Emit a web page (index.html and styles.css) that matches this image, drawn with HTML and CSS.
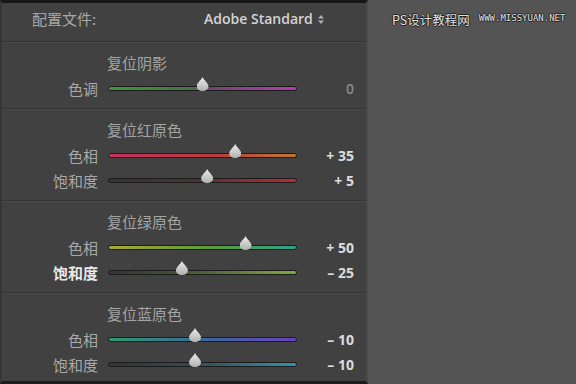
FILE: index.html
```html
<!DOCTYPE html>
<html>
<head>
  <title>HSL</title>
  <link rel="stylesheet" href="styles.css">
</head>
<body>
  <div class="panel">
    <div class="profile">
      <span class="profile-label">配置文件:</span>
      <span class="profile-value">Adobe Standard
        <svg class="arrows" width="6" height="9" viewBox="0 0 6 9"><path d="M0 3.5 L3 0 L6 3.5 Z M0 5.5 L3 9 L6 5.5 Z" fill="#b0b0b0"/></svg>
      </span>
    </div>

    <div class="section">
      <div class="title">复位阴影</div>
      <div class="row">
        <span class="label">色调</span>
        <div class="track shadow-tone"><span class="thumb" style="left: 50%"></span></div>
        <span class="value zero">0</span>
      </div>
    </div>

    <div class="section">
      <div class="title">复位红原色</div>
      <div class="row">
        <span class="label">色相</span>
        <div class="track red-hue"><span class="thumb" style="left: 67.5%"></span></div>
        <span class="value">+ 35</span>
      </div>
      <div class="row">
        <span class="label">饱和度</span>
        <div class="track red-sat"><span class="thumb" style="left: 52.5%"></span></div>
        <span class="value">+ 5</span>
      </div>
    </div>

    <div class="section">
      <div class="title">复位绿原色</div>
      <div class="row">
        <span class="label">色相</span>
        <div class="track green-hue"><span class="thumb" style="left: 73%"></span></div>
        <span class="value">+ 50</span>
      </div>
      <div class="row active">
        <span class="label">饱和度</span>
        <div class="track green-sat"><span class="thumb" style="left: 39%"></span></div>
        <span class="value">&ndash; 25</span>
      </div>
    </div>

    <div class="section last">
      <div class="title">复位蓝原色</div>
      <div class="row">
        <span class="label">色相</span>
        <div class="track blue-hue"><span class="thumb" style="left: 46%"></span></div>
        <span class="value">&ndash; 10</span>
      </div>
      <div class="row">
        <span class="label">饱和度</span>
        <div class="track blue-sat"><span class="thumb" style="left: 46%"></span></div>
        <span class="value">&ndash; 10</span>
      </div>
    </div>
  </div>

  <div class="side">
    <span class="mark-cn">PS设计教程网</span>
    <span class="mark-url">WWW.MISSYUAN.NET</span>
  </div>
</body>
</html>
```

FILE: styles.css
```css
body {
  margin: 0;
  width: 576px;
  height: 384px;
  overflow: hidden;
  display: flex;
  background-color: #545454;
  font-family: "Noto Sans CJK SC", "Open Sans", sans-serif;
}

.panel {
  width: 364px;
  height: 378px;
  background-color: #414141;
  border-top: 3px solid #161616;
  border-bottom: 3px solid #1c1c1c;
  border-left: 2px solid #363636;
  border-right: 2px solid #4b4b4b;
  display: flex;
  flex-direction: column;
}

.profile {
  height: 30px;
  padding-bottom: 8px;
  flex-shrink: 0;
  display: flex;
  align-items: center;
  border-bottom: 1px solid #343434;
  box-shadow: 0 1px 0 #4a4a4a;
}

.profile-label {
  width: 202px;
  padding-left: 30px;
  box-sizing: border-box;
  font-size: 15px;
  color: #a8a8a8;
}

.profile-value {
  font-family: "Open Sans", sans-serif;
  font-weight: 600;
  font-size: 14px;
  color: #d4d4d4;
}

.arrows {
  margin-left: 2px;
  vertical-align: 0;
}

.section {
  flex-shrink: 0;
  padding: 12px 0 7px;
  border-bottom: 1px solid #343434;
  box-shadow: 0 1px 0 #4a4a4a;
}

.section.last {
  border-bottom: none;
  box-shadow: none;
  flex: 1;
}

.title {
  height: 18px;
  line-height: 18px;
  padding-left: 105px;
  margin-bottom: 4px;
  font-size: 15px;
  color: #a4a4a4;
}

.row {
  height: 25px;
  display: flex;
  align-items: center;
}

.label {
  width: 96px;
  text-align: right;
  font-size: 15px;
  line-height: 18px;
  color: #a8a8a8;
}

.row.active .label {
  color: #e8e8e8;
  font-weight: bold;
}

.track {
  position: relative;
  width: 187px;
  height: 3px;
  margin-left: 10px;
  border: 1px solid #1c1c1c;
  border-radius: 3px;
}

.track::before {
  content: "";
  position: absolute;
  left: 2px;
  right: 2px;
  top: -7px;
  height: 2px;
  background: repeating-linear-gradient(to right, #4e4e4e 0, #4e4e4e 1px, transparent 1px, transparent 18.5px);
}

.thumb {
  position: absolute;
  top: -10px;
  width: 12px;
  height: 14px;
  margin-left: -6px;
  background: linear-gradient(#ececec, #b0b0b0);
  clip-path: path("M6 0 C7.5 3.5 12 6 12 9.5 A6 4.5 0 0 1 0 9.5 C0 6 4.5 3.5 6 0 Z");
}

.value {
  width: 57px;
  text-align: right;
  font-family: "Open Sans", sans-serif;
  font-weight: 700;
  font-size: 14px;
  color: #dcdcdc;
}

.value.zero {
  color: #8a8a8a;
  font-weight: 600;
}

.shadow-tone { background: linear-gradient(to right, #3a9a3c, #4f6a4a 48%, #6a4a6a 52%, #b43cb0); }
.red-hue { background: linear-gradient(to right, #c8305e, #b83a3a 55%, #c07830); }
.red-sat { background: linear-gradient(to right, #343434, #4a3434 45%, #c02c34); }
.green-hue { background: linear-gradient(to right, #a8a830, #5a9a3c 55%, #2ea08c); }
.green-sat { background: linear-gradient(to right, #343434, #485a38 45%, #84aa40); }
.blue-hue { background: linear-gradient(to right, #2e9a74, #3a6a9a 50%, #6a40c0); }
.blue-sat { background: linear-gradient(to right, #343434, #344a54 45%, #3494aa); }

.side {
  flex: 1;
  display: flex;
  align-items: flex-start;
  gap: 9px;
  padding: 10px 0 0 24px;
}

.mark-cn {
  font-size: 12.5px;
  color: #e0e0e0;
  text-shadow: 1px 0 #222, -1px 0 #222, 0 1px #222, 0 -1px #222;
}

.mark-url {
  font-family: "DejaVu Sans Mono", monospace;
  font-size: 9px;
  line-height: 17px;
  color: #e0e0e0;
  text-shadow: 1px 0 #222, -1px 0 #222, 0 1px #222, 0 -1px #222;
}
```
